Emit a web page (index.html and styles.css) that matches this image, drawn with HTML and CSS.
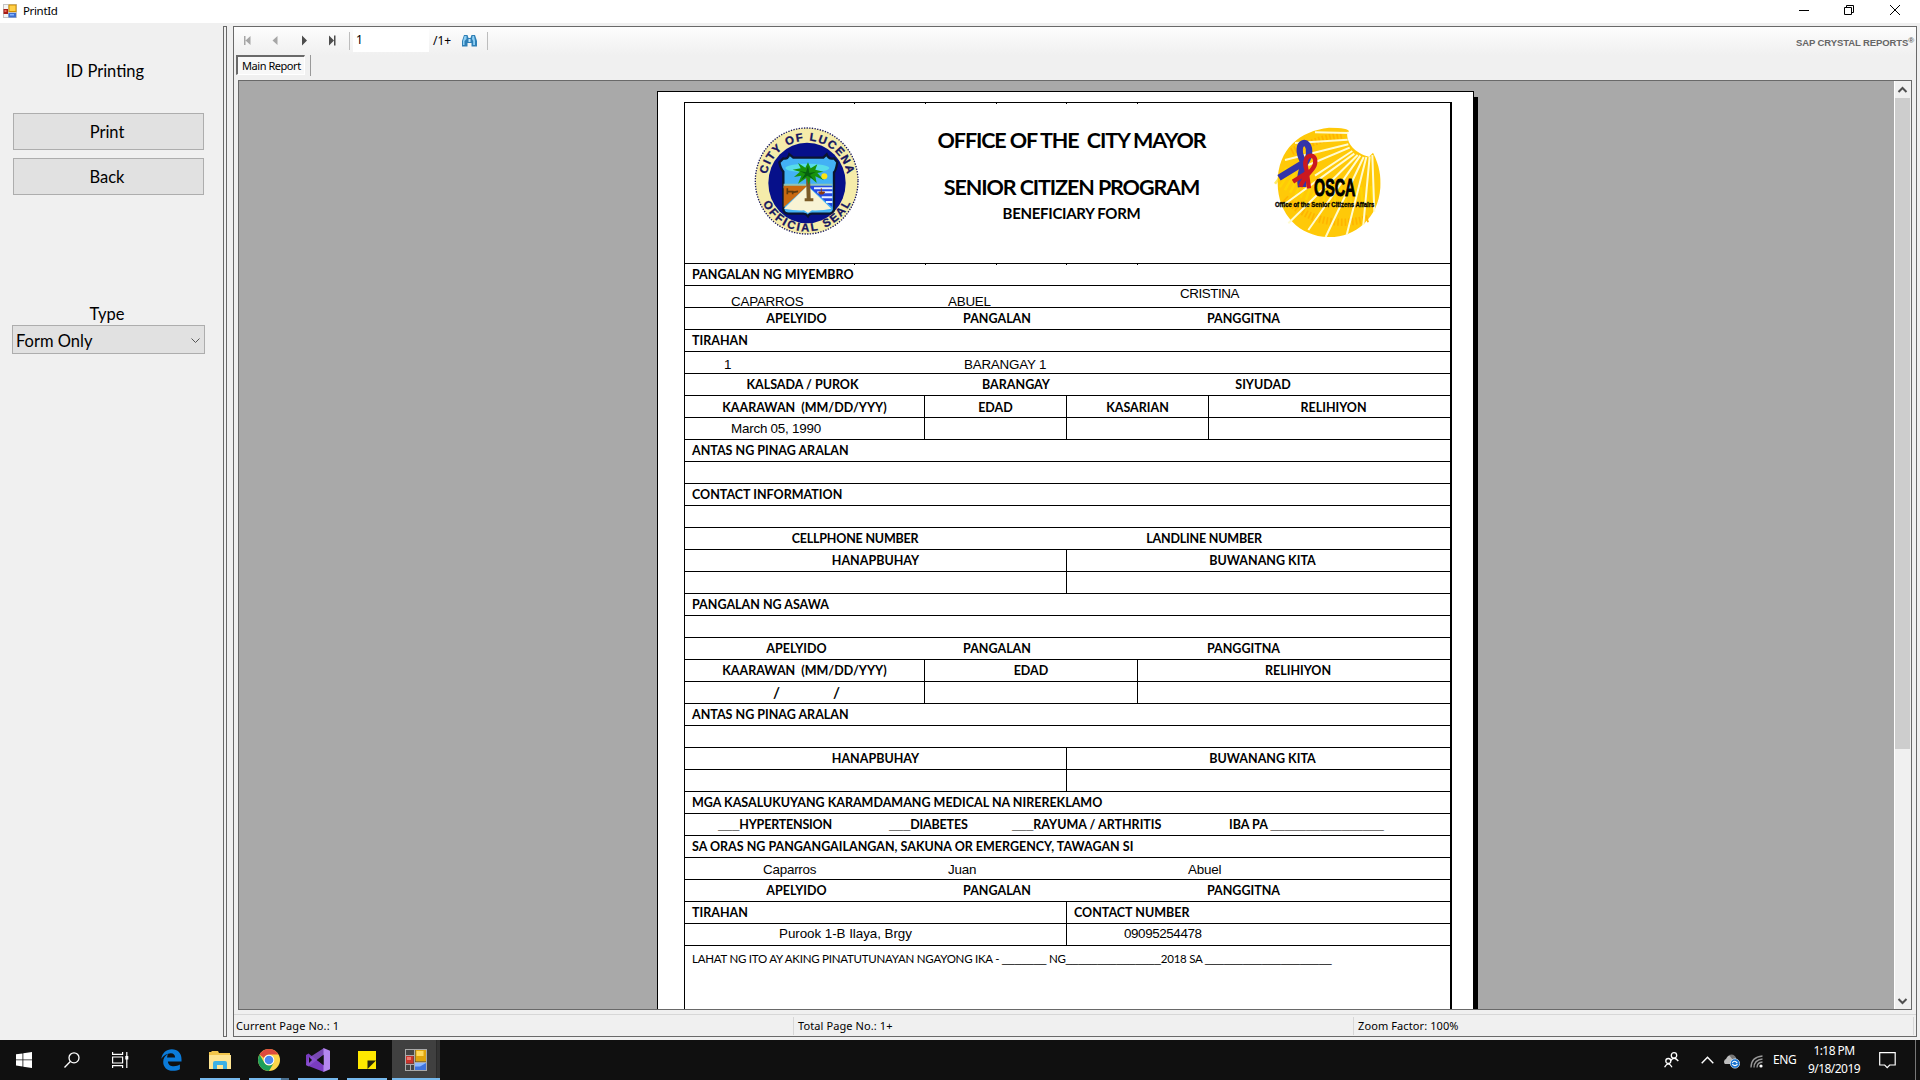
FILE: index.html
```
<!DOCTYPE html>
<html lang="en">
<head>
<meta charset="utf-8">
<title>PrintId</title>
<link rel="stylesheet" href="styles.css">
</head>
<body>
<svg width="0" height="0" class="defs">
  <symbol id="forms-icon" viewBox="0 0 22 22">
    <rect x="0.5" y="0.5" width="21" height="21" fill="#444" stroke="#aaa"/>
    <path d="M0 6.500h9M0 15.500h9M9.500 0v22M5.500 15v7M9 13.500h13" stroke="#aaa" fill="none"/>
    <rect x="1" y="7" width="7.500" height="7.500" fill="#c8342c"/><rect x="2" y="8" width="4" height="3" fill="#ee7a70"/>
    <rect x="10.500" y="1" width="10.500" height="11.500" fill="#e0a50c"/><rect x="11.500" y="2" width="7" height="5" fill="#ffd95c"/>
    <rect x="10" y="14" width="11" height="7" fill="#3f74dc"/><path d="M10 14h11l-6 3.500h-5z" fill="#8db8ff"/>
  </symbol>
</svg>
<div class="window">
  <header class="titlebar">
    <svg class="app-icon" viewBox="0 0 14 14"><rect width="14" height="14" fill="#c4c4c4"/><rect x="1" y="1" width="4" height="4" fill="#f4f4f4"/><rect x="1" y="10" width="4" height="3" fill="#f4f4f4"/><rect x="0.500" y="5" width="4.500" height="5" fill="#a81c14"/><rect x="1.500" y="6" width="2" height="2" fill="#ea6a60"/><rect x="5.500" y="0.500" width="8" height="7.500" fill="#d08f00"/><rect x="6.500" y="1.500" width="6" height="5.500" fill="#ffd048"/><rect x="5.500" y="9" width="7.500" height="4.500" fill="#3d6fd0"/><rect x="7" y="10" width="4" height="1.500" fill="#86b4ff"/></svg>
    <span class="title">PrintId</span>
    <svg class="win-buttons" viewBox="0 0 102 12" fill="none" stroke="#000"><path d="M0 6.500h10M45.500 3.500h7v7h-7zM47.500 3.500v-2h7v7h-2M91 1l10 10M101 1l-10 10"/></svg>
  </header>
  <div class="body">
    <aside class="sidebar">
      <div class="heading">ID Printing</div>
      <button class="btn">Print</button>
      <button class="btn">Back</button>
      <div class="type-label">Type</div>
      <div class="select"><span>Form Only</span><svg width="9" height="6" viewBox="0 0 9 6" fill="none" stroke="#555"><path d="M.5.5l4 4 4-4"/></svg></div>
    </aside>
    <div class="splitter"></div>
    <main class="viewer">
      <div class="toolbar">
        <svg class="nav" viewBox="0 0 94 11"><g fill="#a6a6a6"><path d="M0 1h1.500v9H0zM6.500 1v9L1.500 5.500zM33.500 1v9l-5-4.500z"/></g><g fill="#4d4d4d"><path d="M58 0.500v10l5-5zM85 0.500v10l5-5zM90 .5h1.500v10H90z"/></g></svg>
        <i class="sep sep-a"></i>
        <div class="page-input">1</div>
        <span class="page-total">/1+</span>
        <svg class="binoc" viewBox="0 0 15 13"><path d="M2 1h3.500l1 3h2l1-3H13l2 6v5.500H9.500V9h-4v3.500H0V7z" fill="#2f7fb5"/><path d="M2.500 2h2v3l-2 2v4H1V7zM10.500 2h1.500l1 5v4h-1.800V7l-1.200-2z" fill="#8fd0f5"/><path d="M6.500 5h2v3h-2z" fill="#bfe4fa"/></svg>
        <i class="sep sep-b"></i>
        <span class="brand">SAP CRYSTAL REPORTS<sup>®</sup></span>
      </div>
      <div class="tabs"><div class="tab">Main Report</div><i class="sep sep-c"></i></div>
      <div class="canvas">
        <div class="pages">
          <div class="page">
            <div class="form">
              <div class="form-head ticks">
                <svg class="seal" viewBox="0 0 390 390">
                  <ellipse cx="200" cy="198" rx="154" ry="159" fill="#f5ecaa" stroke="#15155f" stroke-width="4" stroke-dasharray="4 4"/>
                  <ellipse cx="201" cy="204" rx="116" ry="121" fill="#06108a"/>
                  <path d="M118 142l12-12q14 4 18-12l12 10h90l10-10q6 16 22 12l10 12q-4 24-10 30v112q-4 12-14 12h-52q-8 0-12 8-6-8-14-8h-44q-14 0-16-12V170q-8-8-12-28z" fill="#43b1f5" stroke="#0a1530" stroke-width="7"/>
                  <path d="M131 206h146v14H131z" fill="#8ec5b9"/><ellipse cx="202" cy="159" rx="66" ry="13" fill="#57dcea"/>
                  <path d="M131 212h72l-72 65z" fill="#c9690f"/><path d="M203 212h74v65z" fill="#2448e2"/><path d="M222 220h55M232 232h45M245 247h32M258 261h19" stroke="#e8f0ff" stroke-width="6"/>
                  <path d="M202 212L132 281q30 6 60 5l12 8 12-8q34 1 58-5z" fill="#f8f3d4"/>
                  <path d="M142 220v18m0-8h16v8m0-6l16-3" stroke="#5e3a0c" stroke-width="5" fill="none"/>
                  <path d="M198 180h12l2 70h8v9h-26v-9h6z" fill="#7a5a26"/>
                  <path d="M204 142l8 18 20-12-6 16 24 6-18 4 20 22-26-12 4 20-18-16-6 22-6-22-26 18 10-24-22 4 18-16-22-6 24-4-8-16 22 14z" fill="#18920d"/><path d="M204 152l4 22 20-4-18 10 12 14-20-12-18 12 12-18-18-8 20 4z" fill="#075f10"/>
                  <circle cx="253" cy="184" r="9" fill="#ffe414"/><path d="M236 231h18l-4 6h-10zM244 220v12" fill="#8b3a14" stroke="#8b3a14" stroke-width="3"/>
                  <path id="arc-top" d="M79 200A122 123 0 0 1 323 200" fill="none"/>
                  <path id="arc-bottom" d="M55 202A145 147 0 0 0 345 202" fill="none"/>
                  <text class="seal-text"><textPath href="#arc-top" startOffset="50%" textLength="340">CITY OF LUCENA</textPath></text>
                  <text class="seal-text"><textPath href="#arc-bottom" startOffset="50%" textLength="330">OFFICIAL SEAL</textPath></text>
                </svg>
                <div class="head-titles">
                  <h1>OFFICE OF THE&nbsp; CITY MAYOR</h1>
                  <h1>SENIOR CITIZEN PROGRAM</h1>
                  <h2>BENEFICIARY FORM</h2>
                </div>
                <svg class="seal" viewBox="0 0 390 390">
                  <path d="M38 203C38 100 105 48 192 38q60 0 60 12h-5c-5 35 25 65 65 75l12-12c20 40 24 70 22 105C340 310 270 368 190 366 105 364 38 300 38 203z" fill="#ffc908"/>
                  <path d="M60 250c60 60 150 90 250 60M80 110c40-20 90-40 150-50" fill="none" stroke="#ffb400" stroke-width="22" stroke-dasharray="5 6"/>
                  <path d="M45 180c80 60 200 80 290 60" fill="none" stroke="#ffde00" stroke-width="60" stroke-dasharray="7 9" opacity=".6"/>
                  <g stroke="#fffbd0" stroke-width="6"><path d="M250 54L150 52M248 74L90 84M250 88L60 135M254 98L130 150M262 108L150 182M268 116L55 270M278 120L70 325M286 122L130 345M296 126L182 366M304 126L245 360M314 124L295 330M322 120L328 290"/></g>
                  <path d="M42 188l76-46M114 216V140c-32-64 24-74 18-24 0 25-34 40-24 100" fill="none" stroke="#3434a8" stroke-width="19"/>
                  <path d="M84 200l50-32M132 220l-8-57c-16-48 34-54 26-16-4 20-30 30-44 68" fill="none" stroke="#ca1820" stroke-width="13"/>
                  <text x="147" y="242" textLength="124" lengthAdjust="spacingAndGlyphs" class="osca">OSCA</text>
                  <text x="30" y="276" textLength="298" lengthAdjust="spacingAndGlyphs" class="osca-sub">Office of the Senior Citizens Affairs</text>
                </svg>
              </div>
              <div class="row head ticks"><b>PANGALAN NG MIYEMBRO</b></div>
              <div class="row member-names"><span class="low">CAPARROS</span><span class="low">ABUEL</span><span class="high">CRISTINA</span></div>
              <div class="row names"><b>APELYIDO</b><b>PANGALAN</b><b>PANGGITNA</b></div>
              <div class="row head"><b>TIRAHAN</b></div>
              <div class="row address-values"><span>1</span><span>BARANGAY 1</span></div>
              <div class="row address"><b>KALSADA / PUROK</b><b>BARANGAY</b><b>SIYUDAD</b></div>
              <div class="row split four drop"><div><b>KAARAWAN&nbsp; (MM/DD/YYY)</b></div><div><b>EDAD</b></div><div><b>KASARIAN</b></div><div><b>RELIHIYON</b></div></div>
              <div class="row split four"><div class="birth"><span>March 05, 1990</span></div><div></div><div></div><div></div></div>
              <div class="row head"><b>ANTAS NG PINAG ARALAN</b></div>
              <div class="row"></div>
              <div class="row head"><b>CONTACT INFORMATION</b></div>
              <div class="row"></div>
              <div class="row phones"><b>CELLPHONE NUMBER</b><b>LANDLINE NUMBER</b></div>
              <div class="row split two"><div><b>HANAPBUHAY</b></div><div><b>BUWANANG KITA</b></div></div>
              <div class="row split two"><div></div><div></div></div>
              <div class="row head"><b>PANGALAN NG ASAWA</b></div>
              <div class="row"></div>
              <div class="row names"><b>APELYIDO</b><b>PANGALAN</b><b>PANGGITNA</b></div>
              <div class="row split three"><div><b>KAARAWAN&nbsp; (MM/DD/YYY)</b></div><div><b>EDAD</b></div><div><b>RELIHIYON</b></div></div>
              <div class="row split three"><div class="slashes"><b>/</b><b>/</b></div><div></div><div></div></div>
              <div class="row head"><b>ANTAS NG PINAG ARALAN</b></div>
              <div class="row"></div>
              <div class="row split two"><div><b>HANAPBUHAY</b></div><div><b>BUWANANG KITA</b></div></div>
              <div class="row split two"><div></div><div></div></div>
              <div class="row head"><b>MGA KASALUKUYANG KARAMDAMANG MEDICAL NA NIREREKLAMO</b></div>
              <div class="row illness"><span><b class="blank">___</b><b class="tight">HYPERTENSION</b></span><span><b class="blank">___</b><b class="tight">DIABETES</b></span><span><b class="blank">___</b><b>RAYUMA / ARTHRITIS</b></span><span><b>IBA PA </b><b class="blank">________________</b></span></div>
              <div class="row head"><b>SA ORAS NG PANGANGAILANGAN, SAKUNA OR EMERGENCY, TAWAGAN SI</b></div>
              <div class="row contact-names"><span>Caparros</span><span>Juan</span><span>Abuel</span></div>
              <div class="row names"><b>APELYIDO</b><b>PANGALAN</b><b>PANGGITNA</b></div>
              <div class="row split two heads"><div><b>TIRAHAN</b></div><div><b>CONTACT NUMBER</b></div></div>
              <div class="row split two contact-values"><div><span>Purook 1-B Ilaya, Brgy</span></div><div><span>09095254478</span></div></div>
              <p class="oath"><span>LAHAT NG ITO AY AKING PINATUTUNAYAN NGAYONG IKA - </span><span class="line">_______</span><span> NG</span><span class="line">_______________</span><span>2018 SA </span><span class="line">____________________</span></p>
            </div>
          </div>
        </div>
        <div class="scrollbar">
          <svg width="17" height="17" fill="none" stroke="#505050" stroke-width="2"><path d="M4.500 11l4-4 4 4"/></svg>
          <div class="thumb"></div>
          <svg width="17" height="17" fill="none" stroke="#505050" stroke-width="2"><path d="M4.500 7l4 4 4-4"/></svg>
        </div>
      </div>
      <footer class="status"><span>Current Page No.: 1</span><span>Total Page No.: 1+</span><span>Zoom Factor: 100%</span></footer>
    </main>
  </div>
  <nav class="taskbar">
    <div class="task"><svg width="16" height="16" viewBox="0 0 16 16" fill="#fff"><path d="M0 2.300L6.500 1.400v6.100H0zM7.300 1.300L16 0v7.500H7.300zM0 8.300h6.500v6.200L0 13.600zM7.300 8.300H16V16l-8.700-1.300z"/></svg></div>
    <div class="task"><svg width="16" height="16" viewBox="0 0 16 16" fill="none" stroke="#fff" stroke-width="1.300"><circle cx="10" cy="5.800" r="5"/><path d="M6.300 9.500L.5 15.500"/></svg></div>
    <div class="task"><svg width="17" height="16" viewBox="0 0 17 16" fill="none" stroke="#fff" stroke-width="1.200"><path d="M.6 0v2.400h10V0M.6 16v-2.400h10V16M.6 5h10v6H.6zM14.800 0v16"/><path d="M13.300 4h3v3.500h-3z" fill="#fff" stroke="none"/></svg></div>
    <div class="task"><svg width="21" height="22" viewBox="0 0 21 22"><path d="M.3 9.800C1.200 4 5.300.3 10.800.3c6 0 9.700 4.200 9.700 9.700v2.400H6.900c.2 3.200 2.700 4.900 6 4.900 2.300 0 4.300-.7 6-1.700v4.600c-1.900 1-4.300 1.600-7 1.600-5.700 0-9.700-3.500-9.700-8.800 0-3.700 2-6.600 5.200-8.200-.8 1-1.200 2.100-1.300 3.800h8c0-2.700-1.500-4.300-4.300-4.300C6 4.300 2.500 6.700.3 9.800z" fill="#0b7bd9"/></svg></div>
    <div class="task open"><svg width="22" height="18" viewBox="0 0 22 18"><path d="M0 1h2l1-1h6l1 2h11v16H0z" fill="#f3c64c"/><path d="M0 4h22v14H0z" fill="#ffe592"/><path d="M4 18v-6q0-2 2-2h10q2 0 2 2v6h-4v-4H8v4z" fill="#3cb1e5"/></svg></div>
    <div class="task open grouped"><svg width="22" height="22" viewBox="0 0 22 22"><circle cx="11" cy="11" r="11" fill="#fdd54a"/><path d="M1.500 5.500A11 11 0 0 1 20.500 5.500H11a5.500 5.500 0 0 0-5 3.500z" fill="#de4b3e"/><path d="M1.500 5.500A11 11 0 0 0 11 22l5-8.500a5.500 5.500 0 0 1-9.800 0z" fill="#1d9f5b"/><circle cx="11" cy="11" r="5.300" fill="#fff"/><circle cx="11" cy="11" r="4.300" fill="#4b88ee"/></svg></div>
    <div class="task open"><svg width="24" height="24" viewBox="0 0 24 24"><path d="M0 7l2.500-1.500L18 17.500V24L2.500 18 0 17z" fill="#7a3cc0"/><path d="M0 17l2.500 1.500L18 6.500V0L2.500 10z" fill="#8b52d0" opacity=".85"/><path d="M17.500 0L24 2.800v18.400L17.500 24z" fill="#b487ee"/><path d="M17.500 7v10L11 12z" fill="#111"/><path d="M3 9v6l3-3z" fill="#111"/></svg></div>
    <div class="task open"><svg width="18" height="18" viewBox="0 0 18 18"><path d="M0 0h18v18H0z" fill="#ffe800"/><path d="M9.500 9.500H18L9.500 18z" fill="#26260c"/></svg></div>
    <div class="task active"><svg width="22" height="22"><use href="#forms-icon"/></svg></div>
    <div class="tray">
      <svg class="people" viewBox="0 0 15 16" fill="none" stroke="#fff" stroke-width="1.300"><circle cx="10" cy="3.400" r="2.700"/><path d="M6.500 9q3.500-5.500 7.800 0M.6 15.300q3.600-7 7.400 0"/><circle cx="4.300" cy="9" r="2.500"/></svg>
      <svg class="chev" viewBox="0 0 13 8" fill="none" stroke="#fff" stroke-width="1.400"><path d="M.7 7.200l5.800-6 5.800 6"/></svg>
      <svg class="cloud" viewBox="0 0 17 15"><path d="M2 10a3 3 0 0 1 1-5Q5 0 9 1.500q4 0 4 5V10z" fill="#bdbdbd"/><path d="M6 1q5-2 7 3l-3 2z" fill="#777"/><circle cx="12" cy="9.500" r="4.700" fill="#1672d0" stroke="#fff" stroke-width=".6"/><path d="M9.300 9q2-3.500 5 0m.2 1.200q-2.500 3-5.200 0" stroke="#fff" fill="none" stroke-width="1.200"/></svg>
      <svg class="wifi" viewBox="0 0 13 13" fill="none" stroke="#999" stroke-width="1.300"><path d="M1 12.500Q1 2 12.500 1M4 12.500Q4 5 12.500 4M7 12.500q0-5 5.500-5.500"/><circle cx="11" cy="11" r="1.600" fill="#fff" stroke="none"/></svg>
      <span class="lang">ENG</span>
      <div class="clock"><span>1:18 PM</span><span>9/18/2019</span></div>
      <svg class="action" viewBox="0 0 17 17" fill="none" stroke="#fff" stroke-width="1.200"><path d="M.7.700h15.500v12.300h-5.500l-2.500 2.700-2.500-2.700h-5z"/></svg>
    </div>
  </nav>
</div>
</body>
</html>
```
FILE: styles.css
```
* { box-sizing: border-box; margin: 0; padding: 0; }
body { width: 1920px; height: 1080px; overflow: hidden; background: #f0f0f0; color: #000; font-family: "Noto Sans", sans-serif; }
svg { display: block; flex: none; }
.defs { position: absolute; }
.window { display: flex; flex-direction: column; height: 1080px; }

.titlebar { display: flex; height: 23px; background: #fff; padding-left: 3px; font-size: 11.500px; line-height: 22px; letter-spacing: -.35px; }
.app-icon { width: 14px; height: 14px; margin-top: 4px; }
.title { margin-left: 6px; }
.win-buttons { width: 102px; height: 12px; margin: 4px 19px 0 auto; }

.body { display: flex; height: 1017px; padding: 3px 3px 3px 0; }
.sidebar { width: 223px; padding: 33px 18px 0 12px; font-family: Lato, sans-serif; font-size: 16.500px; }
.heading { height: 24px; line-height: 24px; margin: 0 0 30px 54px; white-space: nowrap; }
.btn { display: block; width: 191px; height: 37px; margin: 0 0 8px 1px; padding-right: 3px; border: 1px solid #adadad; background: #e1e1e1; font: inherit; color: #000; }
.type-label { margin-top: 108px; height: 22px; line-height: 22px; text-align: center; padding-right: 3px; }
.select { display: flex; align-items: center; justify-content: space-between; width: 193px; height: 29px; border: 1px solid #adadad; background: #e1e1e1; padding: 2px 4px 0 3px; }
.splitter { width: 4px; height: 1011px; margin-right: 6px; border: 1px solid #696969; }

.viewer { width: 1684px; height: 1011px; border: 1px solid #696969; font-size: 11px; }
.toolbar { display: flex; height: 28px; background: linear-gradient(#fdfdfd, #f0f0f0); }
.nav { width: 94px; height: 11px; margin: 8px 0 0 10px; }
.sep { width: 1px; background: #bdbdbd; flex: none; }
.sep-a { height: 18px; margin: 5px 0 0 11px; }
.page-input { width: 76px; height: 23px; margin: 2px 0 0 3px; background: #fff; padding-left: 3px; line-height: 21px; font-size: 12px; }
.page-total { margin-left: 4px; line-height: 28px; font-size: 12px; }
.binoc { width: 15px; height: 13px; margin: 7px 0 0 11px; }
.sep-b { height: 18px; margin: 5px 0 0 10px; }
.brand { display: flex; margin-left: auto; padding-right: 2px; font: bold 9.500px/31px "Liberation Sans", sans-serif; color: #666; letter-spacing: -.1px; }
.brand sup { font-size: 8px; line-height: 28px; }
.tabs { display: flex; height: 25px; }
.tab { width: 69px; height: 20px; margin-left: 2px; padding-left: 4px; background: #f8f8f8; border: 1px solid #fff; border-top: 2px solid #696969; border-left: 2px solid #696969; line-height: 17px; white-space: nowrap; letter-spacing: -.45px; }
.sep-c { height: 21px; margin-left: 5px; background: #999; }
.canvas { display: flex; width: 1674px; height: 930px; margin-left: 4px; border: 1px solid #696969; background: #a9a9a9; }
.pages { flex: 1; height: 928px; overflow: hidden; padding: 10px 0 0 418px; }
.page { width: 817px; height: 960px; background: #fff; border: 1px solid #000; box-shadow: 4px 6px 0 #000; padding: 10px 0 0 26px; }
.scrollbar { display: flex; flex-direction: column; width: 17px; background: #f0f0f0; border-left: 1px solid #fff; }
.scrollbar svg { margin-left: -1px; }
.thumb { width: 15px; height: 651px; background: #cdcdcd; margin-bottom: auto; }
.status { display: flex; height: 21px; margin-top: 4px; border-top: 1px solid #d7d7d7; white-space: nowrap; }
.status > span { width: 560px; height: 18px; margin-top: 2px; padding-left: 4px; border-right: 1px solid #d7d7d7; line-height: 18px; letter-spacing: .1px; }
.status > span:first-child { padding-left: 2px; }

.form { width: 768px; height: 960px; border: 1px solid #000; border-right-width: 2px; font-family: Lato, sans-serif; font-size: 12.500px; line-height: 21px; white-space: nowrap; }
.form-head { display: flex; height: 161px; border-bottom: 1px solid #000; padding-left: 55px; }
.ticks {
  --dot: linear-gradient(#000, #000);
  background: var(--dot) 169px 0, var(--dot) 240px 0, var(--dot) 311px 0, var(--dot) 381px 0, var(--dot) 452px 0;
  background-size: 1px 1px;
  background-repeat: no-repeat;
}
.seal { width: 130px; height: 130px; margin-top: 12px; }
.seal-text { font: bold 34px "Liberation Sans", sans-serif; fill: #15155f; stroke: #15155f; text-anchor: middle; }
.osca { font: bold 72px "Liberation Sans", sans-serif; stroke: #000; stroke-width: 3px; }
.osca-sub { font: bold 19px "Liberation Sans", sans-serif; stroke: #000; }
.head-titles { width: 403px; margin-right: -8px; padding-top: 14px; text-align: center; }
.head-titles h1 { font-size: 21.500px; line-height: 47px; letter-spacing: -1.1px; }
.head-titles h2 { font-size: 15px; line-height: 22px; margin-top: -9px; letter-spacing: -.3px; }
.row { display: grid; height: 22px; border-bottom: 1px solid #000; }
.row span, .row b { display: block; }
.head { padding-left: 7px; }
.member-names, .address-values, .contact-names, .birth, .contact-values { font: 13.400px/21px "Liberation Sans", sans-serif; letter-spacing: -.22px; }
.member-names { grid-template-columns: 217px 231px 1fr; padding-left: 46px; }
.low { margin-top: 5px; height: 16px; }
.high { margin-top: -3px; letter-spacing: -.45px; padding-left: 1px; }
.names { grid-template-columns: 223px 178px 315px; text-align: center; }
.address-values { grid-template-columns: 240px 1fr; padding: 5px 0 0 39px; height: 22px; line-height: 16px; }
.address { grid-template-columns: 235px 192px 302px; text-align: center; }
.split { text-align: center; }
.split > div + div { border-left: 1px solid #000; }
.split > div:last-child { padding-left: 8px; }
.four { grid-template-columns: 239px 142px 142px 1fr; }
.three { grid-template-columns: 239px 213px 1fr; }
.two { grid-template-columns: 381px 1fr; }
.drop b { padding-top: 1px; height: 21px; }
.birth { text-align: left; padding: 0 0 0 46px; }
.phones { grid-template-columns: 340px 358px; text-align: center; letter-spacing: -.2px; }
.slashes { display: flex; gap: 53px; padding-left: 88px; font-size: 15px; }
.illness { grid-template-columns: 171px 123px 217px 1fr; padding-left: 33px; }
.illness > span { display: flex; align-items: baseline; height: 21px; white-space: pre; }
.blank { font-family: "Liberation Sans", sans-serif; font-size: 12.750px; }
.tight { letter-spacing: -.2px; }
.contact-names { grid-template-columns: 185px 240px 1fr; padding: 1px 0 0 78px; }
.heads { text-align: left; }
.heads > div, .heads > div:last-child { padding-left: 7px; }
.contact-values { text-align: left; line-height: 19px; }
.contact-values > div:first-child { padding-left: 94px; letter-spacing: -.05px; }
.contact-values > div:last-child { padding-left: 57px; letter-spacing: -.4px; }
.oath { display: flex; align-items: baseline; padding: 2px 0 0 7px; font-size: 11.500px; letter-spacing: -.24px; white-space: pre; }
.line { font-family: "Liberation Sans", sans-serif; font-size: 11.400px; letter-spacing: 0; }

.taskbar { display: flex; height: 40px; background: #101010; color: #fff; font-size: 12px; }
.task { display: flex; align-items: center; justify-content: center; width: 40px; height: 40px; margin-right: 9px; }
.task:nth-child(1) { margin-left: 4px; margin-right: 8px; }
.task:nth-child(2), .task:nth-child(3) { margin-right: 8px; }
.task:nth-child(3) { margin-right: 11px; }
.open { border-bottom: 2px solid #76b9ed; padding-top: 2px; }
.grouped { border-image: linear-gradient(90deg, #76b9ed 78%, #4a7090 78%) 2; }
.task.active { width: 48px; margin-left: -4px; padding: 2px 0 0 0; border-bottom: 2px solid #76b9ed; background: linear-gradient(90deg, #404040 44px, #2a2a2a 44px 45px, #333 45px); }
.tray { display: flex; margin-left: auto; margin-right: 4px; border-right: 1px solid #777; }
.people { width: 15px; height: 16px; margin: 12px 22px 0 0; }
.chev { width: 13px; height: 8px; margin: 16px 9px 0 0; }
.cloud { width: 17px; height: 15px; margin: 14px 10px 0 0; }
.wifi { width: 13px; height: 13px; margin: 15px 10px 0 0; }
.lang { width: 24px; line-height: 40px; letter-spacing: -.4px; }
.clock { display: flex; flex-direction: column; width: 60px; margin: 2px 15px 0 7px; line-height: 18px; align-items: center; letter-spacing: -.55px; }
.action { width: 17px; height: 17px; margin: 12px 19px 0 0; }
```
